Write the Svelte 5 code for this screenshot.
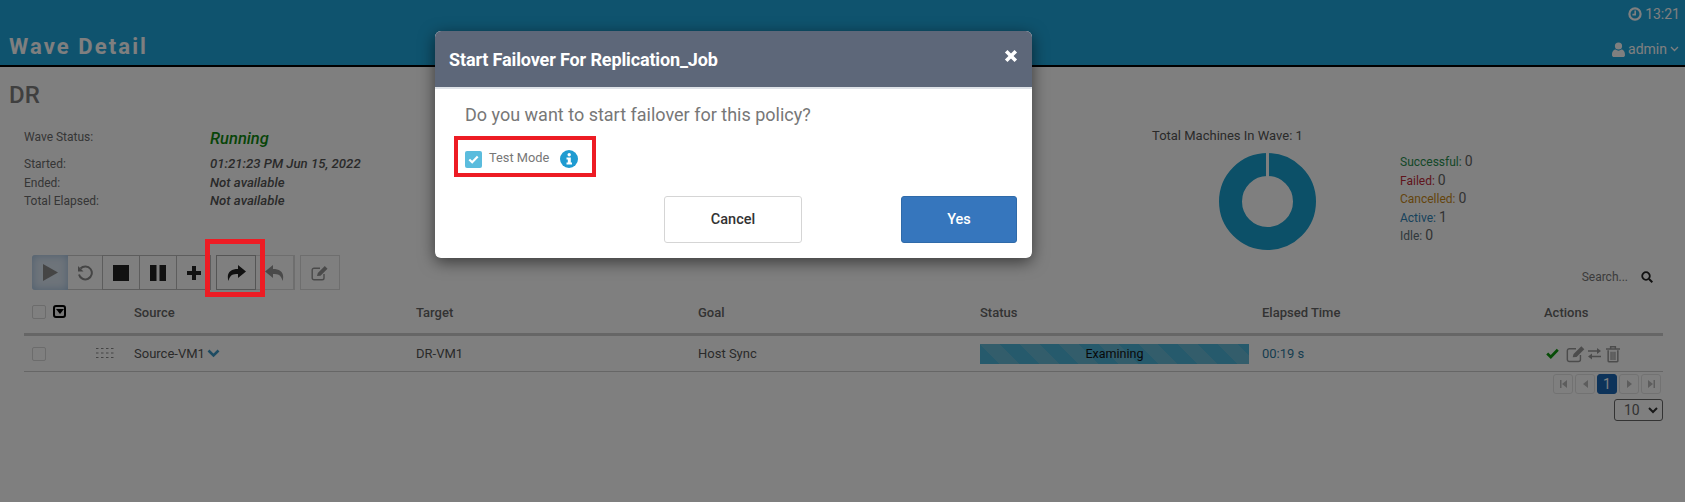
<script>
  const info = [
    { label: 'Started:', value: '01:21:23 PM Jun 15, 2022' },
    { label: 'Ended:', value: 'Not available' },
    { label: 'Total Elapsed:', value: 'Not available' }
  ];
  const legend = [
    { label: 'Successful:', n: 0, cls: 'ok' },
    { label: 'Failed:', n: 0, cls: 'bad' },
    { label: 'Cancelled:', n: 0, cls: 'warn' },
    { label: 'Active:', n: 1, cls: 'act' },
    { label: 'Idle:', n: 0, cls: 'idle' }
  ];
</script>

<div class="page">
  <header class="top">
    <div class="clock">
      <svg width="14" height="14" viewBox="0 0 14 14"><circle cx="7" cy="7" r="5.6" fill="none" stroke="currentColor" stroke-width="2.2"/><path d="M7.2 3.6V7.6H4.4" fill="none" stroke="currentColor" stroke-width="1.6"/></svg>
      <span>13:21</span>
    </div>
    <div class="titlebar">
      <div class="apptitle">Wave Detail</div>
      <div class="user">
        <svg width="13" height="15" viewBox="0 0 13 15"><circle cx="6.5" cy="4" r="3.6" fill="currentColor"/><path d="M0 13C0 9 2 7.600 3.600 7.600 5.500 9 7.500 9 9.400 7.600 11 7.600 13 9 13 13 13 14.400 12 15 11 15H2C1 15 0 14.400 0 13Z" fill="currentColor"/></svg>
        <span>admin</span>
        <svg width="9" height="6" viewBox="0 0 9 6"><path d="M1 1L4.500 4.500 8 1" fill="none" stroke="currentColor" stroke-width="1.300"/></svg>
      </div>
    </div>
  </header>

  <main class="content">
    <h1>DR</h1>
    <section class="summary">
      <div class="info">
        <div class="inforow first"><span class="lab">Wave Status:</span><span class="running">Running</span></div>
        {#each info as r}
          <div class="inforow"><span class="lab">{r.label}</span><span class="val">{r.value}</span></div>
        {/each}
      </div>
      <div class="chart">
        <div class="charttitle">Total Machines In Wave: 1</div>
        <svg class="donut" width="97" height="97" viewBox="0 0 97 97">
          <circle cx="48.500" cy="48.500" r="37" fill="none" stroke="#18a0d0" stroke-width="23"/>
          <rect x="47" y="0" width="3" height="24" fill="#fff"/>
        </svg>
      </div>
      <ul class="legend">
        {#each legend as l}
          <li><span class={l.cls}>{l.label}</span> <b>{l.n}</b></li>
        {/each}
      </ul>
    </section>

    <div class="toolrow">
      <div class="toolbar">
        <div class="group">
          <button class="tb play" aria-label="Start"><svg width="15" height="17" viewBox="0 0 15 17"><path d="M0 0L15 8.500 0 17Z" fill="#8a8a8a"/></svg></button>
          <button class="tb w35" aria-label="Restart"><svg width="16" height="16" viewBox="0 0 16 16"><path d="M3.500 3.500A6.500 6.500 0 1 1 2 9.500" fill="none" stroke="#8a8a8a" stroke-width="2"/><path d="M1 1V6.500H6.500Z" fill="#8a8a8a"/></svg></button>
          <button class="tb w37 edge" aria-label="Stop"><svg width="16" height="16" viewBox="0 0 16 16"><rect width="16" height="16" fill="#222"/></svg></button>
          <button class="tb w37 edge" aria-label="Pause"><svg width="16" height="16" viewBox="0 0 16 16"><rect width="6.500" height="16" fill="#222"/><rect x="9.500" width="6.500" height="16" fill="#222"/></svg></button>
          <button class="tb w35 edge" aria-label="Add"><svg width="14" height="14" viewBox="0 0 14 14"><path d="M7 0V14M0 7H14" stroke="#222" stroke-width="4"/></svg></button>
        </div>
        <div class="group second">
          <button class="tb fwd" aria-label="Failover">
            <svg width="19" height="16" viewBox="0 0 19 16"><path d="M11 0L19 6.500 11 13V9C6 9 3 9.500 1.500 16 -1 8 3.500 4 11 4Z" fill="#222"/></svg>
            <span class="mark"></span>
          </button>
          <button class="tb off bk" aria-label="Failback"><svg width="19" height="16" viewBox="0 0 19 16"><path d="M8 0L0 6.500 8 13V9C13 9 16 9.500 17.500 16 20 8 15.500 4 8 4Z" fill="#8a8a8a"/></svg></button>
          <button class="tb off ed" aria-label="Edit"><svg width="18" height="16" viewBox="0 0 18 16"><path d="M13 9V13A1.800 1.800 0 0 1 11.200 14.800H3A1.800 1.800 0 0 1 1.200 13V5A1.800 1.800 0 0 1 3 3.200H9" fill="none" stroke="#8a8a8a" stroke-width="1.400"/><path d="M6 11L6.800 8 13.800 1 16.500 3.700 9.500 10.700Z" fill="#8a8a8a"/></svg></button>
        </div>
      </div>
      <div class="search">
        <span>Search...</span>
        <svg width="12" height="12" viewBox="0 0 12 12"><circle cx="5" cy="5" r="3.800" fill="none" stroke="#222" stroke-width="1.800"/><path d="M8 8L11.300 11.300" stroke="#222" stroke-width="2"/></svg>
      </div>
    </div>

    <div class="table">
      <div class="row head">
        <div class="sel"><span class="cb"></span><span class="menu"><i></i></span></div>
        <div>Source</div><div>Target</div><div>Goal</div><div>Status</div><div>Elapsed Time</div><div>Actions</div>
      </div>
      <div class="row body">
        <div class="sel"><span class="cb"></span>
          <svg class="grip" width="20" height="13" viewBox="0 0 20 13">
            {#each [1, 5.500, 10] as y}{#each [1, 6, 11, 16] as x}<rect {x} {y} width="2.500" height="1" fill="#888"/>{/each}{/each}
          </svg>
        </div>
        <div class="srccell">Source-VM1
          <svg width="13" height="9" viewBox="0 0 13 9"><path d="M1.500 1.500L6.500 6.500 11.500 1.500" fill="none" stroke="#3a97c4" stroke-width="2.600"/></svg>
        </div>
        <div>DR-VM1</div>
        <div>Host Sync</div>
        <div><div class="bar">Examining</div></div>
        <div class="time">00:19 s</div>
        <div class="acts">
          <svg width="13" height="11" viewBox="0 0 13 11"><path d="M1.200 5.500L4.800 9 11.800 1.800" fill="none" stroke="#0f9a0f" stroke-width="2.800"/></svg>
          <svg class="e" width="20" height="18" viewBox="0 0 18 16"><path d="M13 9V13A1.800 1.800 0 0 1 11.200 14.800H3A1.800 1.800 0 0 1 1.200 13V5A1.800 1.800 0 0 1 3 3.200H9" fill="none" stroke="#999" stroke-width="1.300"/><path d="M6 11L6.800 8 13.800 1 16.500 3.700 9.500 10.700Z" fill="#999"/></svg>
          <svg class="s" width="13" height="12" viewBox="0 0 13 12"><path d="M0 3H9.500M13 8.500H3.500" stroke="#999" stroke-width="1.700"/><path d="M9 0L13 3 9 6ZM4 5.500L0 8.500 4 11.500Z" fill="#999"/></svg>
          <svg width="14" height="18" viewBox="0 0 13 16"><path d="M2 4.500V14.500A1 1 0 0 0 3 15.300H10A1 1 0 0 0 11 14.500V4.500" fill="none" stroke="#999" stroke-width="1.400"/><path d="M4.700 6V13.500M6.500 6V13.500M8.300 6V13.500" stroke="#999" stroke-width="1.100"/><path d="M0 3.400H13M4.300 3V1.200H8.700V3" fill="none" stroke="#999" stroke-width="1.400"/></svg>
        </div>
      </div>
    </div>

    <div class="pager">
      <span class="pg"><svg width="7" height="8" viewBox="0 0 7 8"><path d="M0 0H1.500V8H0ZM7 0V8L2 4Z" fill="#bbb"/></svg></span>
      <span class="pg"><svg width="5" height="8" viewBox="0 0 5 8"><path d="M5 0V8L0 4Z" fill="#bbb"/></svg></span>
      <span class="pg cur">1</span>
      <span class="pg"><svg width="5" height="8" viewBox="0 0 5 8"><path d="M0 0V8L5 4Z" fill="#bbb"/></svg></span>
      <span class="pg"><svg width="7" height="8" viewBox="0 0 7 8"><path d="M0 0V8L5 4ZM5.500 0H7V8H5.500Z" fill="#bbb"/></svg></span>
    </div>
    <div class="sizewrap">
      <div class="size"><span>10</span>
        <svg width="10" height="7" viewBox="0 0 10 7"><path d="M1 1L5 5 9 1" fill="none" stroke="#333" stroke-width="2"/></svg>
      </div>
    </div>
  </main>

  <div class="overlay"></div>

  <div class="modal">
    <div class="mhead">
      <span>Start Failover For Replication_Job</span>
      <svg width="14" height="14" viewBox="0 0 14 14"><path d="M2.200 2.200L11.800 11.800M11.800 2.200L2.200 11.800" stroke="#fff" stroke-width="3.600"/></svg>
    </div>
    <div class="mbody">
      <p>Do you want to start failover for this policy?</p>
      <div class="test">
        <span class="mark2"></span>
        <span class="check"><svg width="11" height="9" viewBox="0 0 11 9"><path d="M1.300 4.500L4.200 7.300 9.700 1.500" fill="none" stroke="#fff" stroke-width="2.200"/></svg></span>
        <span class="tm">Test Mode</span>
        <svg class="i" width="18" height="18" viewBox="0 0 18 18"><circle cx="9" cy="9" r="9" fill="#1f9bd1"/><circle cx="9.200" cy="4.800" r="1.700" fill="#fff"/><path d="M6.500 7.500H10.800V12.500H12V14.500H6.500V12.500H7.800V9.500H6.500Z" fill="#fff"/></svg>
      </div>
      <div class="btns">
        <button class="cancel">Cancel</button>
        <button class="yes">Yes</button>
      </div>
    </div>
  </div>
</div>

<style>
  :global(body) { margin: 0; background: #fff; }
  .page { position: relative; width: 1685px; height: 502px; overflow: hidden; font-family: Roboto, "Liberation Sans", sans-serif; font-size: 12px; color: #666; background: #fff; }
  .top { height: 65px; background: #1ea6dd; border-bottom: 2px solid #000; color: #fff; display: flex; flex-direction: column; }
  .clock { height: 28px; display: flex; align-items: center; justify-content: flex-end; gap: 3px; padding-right: 5px; font-size: 14px; }
  .titlebar { flex: 1; display: flex; justify-content: space-between; align-items: center; padding: 0 6px 0 9px; }
  .apptitle { font-size: 22px; font-weight: 700; letter-spacing: 2.1px; }
  .user { display: flex; align-items: center; gap: 3px; font-size: 14px; padding-top: 5px; }
  .content { padding: 0 22px 0 24px; }
  h1 { margin: 11px 0 0 -15px; font-size: 24px; line-height: 34px; font-weight: 500; color: #7e7e7e; }
  .summary { display: flex; height: 123px; margin-top: 15px; }
  .info { width: 1128px; margin-top: -14px; padding-top: 14px; }
  .inforow { display: grid; grid-template-columns: 186px 1fr; line-height: 18px; height: 18.500px; }
  .inforow.first { height: 27px; margin-top: 1px; }
  .lab { color: #6c6c6c; }
  .val { font-size: 13.200px; font-style: italic; font-weight: 500; color: #555; }
  .running { font-size: 16.500px; font-style: italic; font-weight: 500; color: #108a10; line-height: 21px; }
  .chart { width: 150px; display: flex; flex-direction: column; align-items: flex-start; }
  .charttitle { width: 150px; text-align: center; font-size: 13px; line-height: 18px; white-space: nowrap; color: #555; }
  .donut { margin: 8px 0 0 67px; }
  .legend { list-style: none; margin: 25px 0 0 98px; padding: 0; }
  .legend li { height: 18.500px; line-height: 18px; white-space: nowrap; }
  .legend b { font-weight: 400; font-size: 14px; color: #666; }
  .ok { color: #2a9050; } .bad { color: #c02a38; } .warn { color: #c88a18; } .act { color: #2f85b8; } .idle { color: #607078; }
  .toolrow { display: flex; justify-content: space-between; align-items: flex-end; margin-top: 5px; padding-left: 8px; }
  .toolbar { display: flex; height: 35px; }
  .group { display: flex; }
  .second { margin-left: 5px; position: relative; }
  button { font-family: inherit; }
  .tb { display: flex; align-items: center; justify-content: center; height: 35px; padding: 0; background: #fff; border: 1px solid #ccc; border-left-width: 0; }
  .tb.edge { border-color: #bbb; border-left-width: 1px; margin-left: -1px; }
  .play { width: 36px; border: 0; border-radius: 3px 0 0 3px; background: #dce8f5; box-shadow: inset 0 0 8px #9dbddc; }
  .w35 { width: 35px; }
  .w37 { width: 38px; }
  .fwd { position: relative; width: 40px; border-left-width: 1px; border-color: #aaa; }
  .mark { position: absolute; left: -12px; top: -17px; width: 60px; height: 58px; box-sizing: border-box; border: 5px solid #ed1c24; z-index: 15; }
  .off { border-color: #ddd; }
  .bk { width: 39px; border-width: 1px; border-left-width: 0; border-right-width: 2px; }
  .ed { width: 40px; margin-left: 5px; border-left-width: 1px; }
  .off svg { opacity: .9; }
  .search { display: flex; align-items: center; gap: 13px; padding-bottom: 6px; color: #777; margin-right: 10px; }
  .row { display: grid; grid-template-columns: 110px 282px 282px 282px 282px 282px 119px; align-items: center; font-size: 13px; }
  .head { height: 41px; padding-top: 2px; border-bottom: 3px solid #ccc; font-weight: 500; color: #666; }
  .body { height: 35px; border-bottom: 1px solid #ccc; color: #555; }
  .sel { display: flex; align-items: center; padding-left: 8px; }
  .head .sel { margin-top: -2px; }
  .cb { display: block; width: 12px; height: 12px; border: 1px solid #d8d8d8; border-radius: 2px; box-sizing: content-box; }
  .menu { display: flex; align-items: center; justify-content: center; margin-left: 7px; width: 13px; height: 13px; border: 2px solid #000; border-radius: 3px; background: #eee; box-sizing: border-box; }
  .menu i { display: block; width: 0; height: 0; border: 4px solid transparent; border-top: 5px solid #000; border-bottom: 0; }
  .grip { margin-left: 49px; }
  .srccell { display: flex; align-items: center; gap: 2px; }
  .bar { width: 269px; height: 20px; line-height: 20px; text-align: center; color: #111; font-size: 12.500px; box-sizing: border-box;
    background: repeating-linear-gradient(45deg, #4db4d8 0 14px, #66bad6 14px 28px); }
  .time { color: #2f7ba0; }
  .acts { display: flex; align-items: center; padding-left: 2px; }
  .acts .e { margin-left: 7px; }
  .acts .s { margin: 0 5px 0 2px; }
  .pager { display: flex; justify-content: flex-end; gap: 2px; margin-top: 2px; padding-right: 2px; }
  .pg { display: flex; align-items: center; justify-content: center; width: 20px; height: 20px; box-sizing: border-box; border: 1px solid #e4e4e4; border-radius: 3px; }
  .cur { background: #1a66b4; border-color: #1a66b4; color: #fff; font-size: 14px; }
  .sizewrap { display: flex; justify-content: flex-end; margin-top: 5px; }
  .size { display: flex; align-items: center; justify-content: space-between; width: 49px; height: 22px; box-sizing: border-box; border: 1px solid #666; border-radius: 3px; padding: 0 4px 0 9px; font-size: 14px; color: #666; }
  .overlay { position: absolute; inset: 0; background: rgba(0, 0, 0, .5); z-index: 10; }
  .modal { position: absolute; left: 435px; top: 31px; width: 597px; height: 227px; z-index: 20; background: #fff; border-radius: 6px; overflow: hidden; box-shadow: 0 4px 16px rgba(0, 0, 0, .55); }
  .mhead { height: 56px; background: #5d6779; border-bottom: 2px solid #dfe3e8; display: flex; align-items: center; justify-content: space-between; padding: 0 14px 0 14px; color: #fff; font-size: 18px; font-weight: 700; letter-spacing: -.13px; }
  .mhead svg { margin-top: -7px; }
  .mbody { padding: 14px 15px 0 30px; }
  p { margin: 0; font-size: 18px; line-height: 24px; color: #777; }
  .test { position: relative; display: flex; align-items: center; height: 18px; margin-top: 23px; }
  .mark2 { position: absolute; left: -11px; top: -14px; width: 142px; height: 41px; box-sizing: border-box; border: 4px solid #ed1c24; }
  .check { display: flex; align-items: center; justify-content: center; width: 17px; height: 17px; background: #5bbcdd; border-radius: 2px; }
  .tm { margin-left: 7px; color: #777; font-size: 12.800px; padding-bottom: 3px; }
  .i { margin-left: 11px; }
  .btns { display: flex; justify-content: flex-end; margin-top: 28px; }
  .btns button { height: 47px; font-size: 14.500px; font-weight: 500; border-radius: 3px; }
  .cancel { width: 138px; background: #fff; border: 1px solid #d5d5d5; color: #333; margin-right: 99px; }
  .yes { width: 116px; background: #3676bd; border: 1px solid #2f6aa9; color: #fff; }
</style>
